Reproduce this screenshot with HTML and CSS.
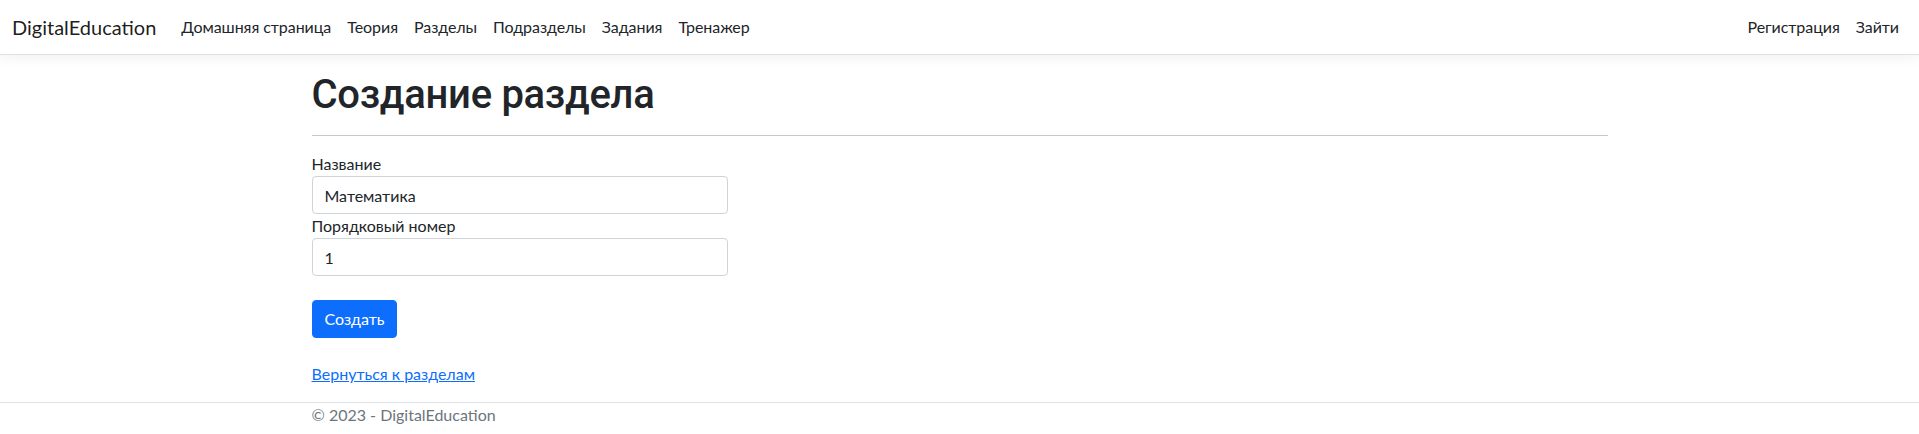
FILE: index.html
```html
<!DOCTYPE html>
<html lang="ru">
<head>
<meta charset="utf-8">
<title>Создание раздела - DigitalEducation</title>
<link rel="stylesheet" href="styles.css">
</head>
<body>
<header>
  <nav class="navbar">
    <div class="navbar-inner">
      <a class="brand" href="#">DigitalEducation</a>
      <ul class="nav nav-main">
        <li><a class="nav-link" href="#">Домашняя страница</a></li>
        <li><a class="nav-link" href="#">Теория</a></li>
        <li><a class="nav-link" href="#">Разделы</a></li>
        <li><a class="nav-link" href="#">Подразделы</a></li>
        <li><a class="nav-link" href="#">Задания</a></li>
        <li><a class="nav-link" href="#">Тренажер</a></li>
      </ul>
      <ul class="nav nav-auth">
        <li><a class="nav-link" href="#">Регистрация</a></li>
        <li><a class="nav-link" href="#">Зайти</a></li>
      </ul>
    </div>
  </nav>
</header>
<div class="container">
  <main class="main">
    <h1 class="title">Создание раздела</h1>
    <hr class="divider">
    <form class="form">
      <div class="form-group">
        <label class="label" for="name">Название</label>
        <input class="form-control" id="name" type="text" value="Математика">
      </div>
      <div class="form-group">
        <label class="label" for="order">Порядковый номер</label>
        <input class="form-control" id="order" type="text" value="1">
      </div>
      <div class="form-group submit-group">
        <button class="btn-primary" type="button">Создать</button>
      </div>
    </form>
    <div class="back">
      <a class="back-link" href="#">Вернуться к разделам</a>
    </div>
  </main>
</div>
<footer class="footer">
  <div class="container">© 2023 - DigitalEducation</div>
</footer>
</body>
</html>
```
FILE: styles.css
```css
* { box-sizing: border-box; }
html, body { margin: 0; padding: 0; }
body {
  font-family: Lato, "Liberation Sans", sans-serif;
  font-size: 16px;
  line-height: 24px;
  color: #212529;
  background: #fff;
}
a { text-decoration: none; }

.navbar {
  background: #fff;
  border-bottom: 1px solid #dee2e6;
  box-shadow: 0 4px 12px rgba(0, 0, 0, 0.05);
  padding: 7px 0;
  margin-bottom: 16px;
}
.navbar-inner {
  display: flex;
  align-items: center;
  padding: 0 12px;
}
.brand {
  font-size: 20px;
  line-height: 30px;
  padding: 5px 0;
  margin-right: 17px;
  color: rgba(0, 0, 0, 0.9);
}
.nav {
  display: flex;
  list-style: none;
  margin: 0;
  padding: 0;
}
.nav-main { flex: 1; }
.nav-link {
  display: block;
  padding: 8px;
  color: #212529;
  letter-spacing: -0.06px;
}

.container {
  max-width: 1320px;
  margin: 0 auto;
  padding: 0 12px;
}
.main { padding-bottom: 16px; }
.title {
  font-family: Roboto, Lato, sans-serif;
  font-weight: 500;
  font-size: 40px;
  line-height: 48px;
  letter-spacing: -0.3px;
  margin: 0 0 8px;
  color: #212529;
}
.divider {
  margin: 16px 0;
  border: 0;
  border-top: 1px solid #c8c9ca;
  height: 0;
}
.form { width: 416px; }
.label { display: block; }
.form-control {
  display: block;
  width: 100%;
  height: 38px;
  padding: 6px 12px;
  font-family: inherit;
  font-size: 16px;
  line-height: 24px;
  color: #212529;
  background: #fff;
  border: 1px solid #ced4da;
  border-radius: 4px;
  outline: none;
}
.submit-group { margin-top: 24px; }
.btn-primary {
  display: inline-block;
  height: 38px;
  padding: 6px 12px;
  font-family: inherit;
  font-size: 16px;
  line-height: 24px;
  color: #fff;
  background: #0d6efd;
  border: 1px solid #0d6efd;
  border-radius: 4px;
  cursor: pointer;
}
.back { margin-top: 24px; }
.back-link {
  color: #0d6efd;
  text-decoration: underline;
}

.footer {
  border-top: 1px solid #dee2e6;
  color: #6c757d;
  line-height: 24px;
}
```
